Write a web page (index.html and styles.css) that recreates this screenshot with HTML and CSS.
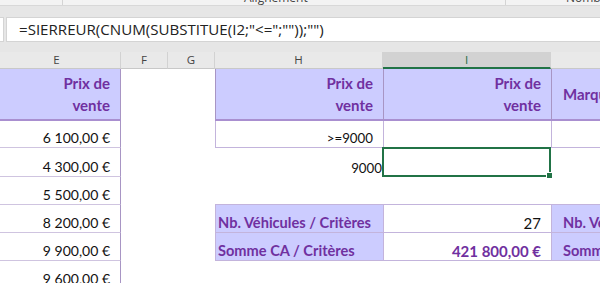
FILE: index.html
```html
<!DOCTYPE html>
<html lang="fr">
<head>
<meta charset="utf-8">
<title>Excel</title>
<link rel="stylesheet" href="styles.css">
</head>
<body>
<div class="app">
  <div class="ribbon">
    <div class="rgroup g1"></div>
    <div class="rgroup g2"><span class="rlabel">Alignement</span></div>
    <div class="rgroup g3"><span class="rlabel">Nombre</span></div>
  </div>
  <div class="fbar">
    <div class="namebox"></div>
    <div class="formula">=SIERREUR(CNUM(SUBSTITUE(I2;"&lt;=";""));"")</div>
  </div>
  <div class="sheet">
    <div class="ch">E</div>
    <div class="ch">F</div>
    <div class="ch">G</div>
    <div class="ch">H</div>
    <div class="ch sel">I</div>
    <div class="ch"></div>

    <div class="c e hd">Prix de<br>vente</div>
    <div class="c"></div>
    <div class="c"></div>
    <div class="c hd hl">Prix de<br>vente</div>
    <div class="c hd hl">Prix de<br>vente</div>
    <div class="c hd hl mid">Marque</div>

    <div class="c e num">6 100,00 €</div>
    <div class="c"></div>
    <div class="c"></div>
    <div class="c num sm bl bb">&gt;=9000</div>
    <div class="c bl bb"></div>
    <div class="c bl bb"></div>

    <div class="c e num">4 300,00 €</div>
    <div class="c"></div>
    <div class="c"></div>
    <div class="c num sm tight">9000</div>
    <div class="c active"><span class="handle"></span></div>
    <div class="c"></div>

    <div class="c e num">5 500,00 €</div>
    <div class="c"></div>
    <div class="c"></div>
    <div class="c bb"></div>
    <div class="c bb"></div>
    <div class="c bb"></div>

    <div class="c e num">8 200,00 €</div>
    <div class="c"></div>
    <div class="c"></div>
    <div class="c lab bl bb">Nb. Véhicules / Critères</div>
    <div class="c big bl bb">27</div>
    <div class="c lab lab2 bl bb">Nb. Véhicules / Critères</div>

    <div class="c e num">9 900,00 €</div>
    <div class="c"></div>
    <div class="c"></div>
    <div class="c lab bl bb">Somme CA / Critères</div>
    <div class="c big bold bl bb">421 800,00 €</div>
    <div class="c lab lab2 bl bb">Somme CA / Critères</div>

    <div class="c e num">9 600,00 €</div>
    <div class="c"></div>
    <div class="c"></div>
    <div class="c"></div>
    <div class="c"></div>
    <div class="c"></div>
  </div>
</div>
</body>
</html>
```
FILE: styles.css
```css
html, body {
  margin: 0;
  padding: 0;
  background: #e6e6e6;
  overflow: hidden;
}
.app {
  width: 600px;
  height: 283px;
  overflow: hidden;
  font-family: "Lato", "Open Sans", sans-serif;
}
.ribbon {
  height: 5px;
  background: #f3f3f3;
  border-bottom: 1px solid #d8d8d8;
  display: flex;
  overflow: hidden;
}
.rgroup {
  height: 5px;
  border-right: 1px solid #d4d4d4;
  position: relative;
  overflow: hidden;
}
.g1 { width: 62px; }
.g2 { width: 442px; }
.g3 { flex: 1; border-right: none; }
.rlabel {
  display: block;
  font-family: "Open Sans", sans-serif;
  font-size: 12px;
  line-height: 12px;
  color: #444;
  margin-top: -8px;
}
.g2 .rlabel { padding-left: 181px; }
.g3 .rlabel { padding-left: 60px; }
.fbar {
  display: flex;
  gap: 2px;
  margin-top: 11px;
  height: 25px;
}
.namebox {
  width: 3px;
  background: #fff;
  border: 1px solid #d4d4d4;
  border-left: none;
}
.formula {
  flex: 1;
  background: #fff;
  border: 1px solid #d4d4d4;
  border-right: none;
  font-family: "Open Sans", sans-serif;
  font-size: 15.1px;
  line-height: 23px;
  color: #222;
  padding-left: 12px;
  white-space: nowrap;
}
.sheet {
  margin-top: 10px;
  margin-left: -7px;
  display: grid;
  grid-template-columns: 128px 47px 47px 168px 168px 60px;
  grid-template-rows: 17px 52px 27px 29px 28px 28px 28px 28px;
  background: #fff;
}
.ch {
  background: #e9e9e9;
  border-right: 1px solid #d2d2d2;
  border-bottom: 1px solid #c8c8c8;
  font-family: "Open Sans", sans-serif;
  font-size: 11.5px;
  line-height: 16px;
  color: #444;
  text-align: center;
  box-sizing: border-box;
}
.ch.sel {
  background: #d2d2d2;
  color: #1e6b41;
  border-bottom: 2px solid #217346;
}
.c {
  box-sizing: border-box;
  position: relative;
  font-size: 14px;
  color: #111;
  white-space: nowrap;
  overflow: visible;
}
.e {
  border-right: 1px solid #a895c4;
  border-bottom: 1px solid #cfc4e0;
}
.hd {
  background: #ccccff;
  color: #7030a0;
  font-weight: bold;
  font-size: 15px;
  line-height: 22px;
  text-align: right;
  padding: 3px 10px 0 0;
  border-bottom: 2px solid #a98fd0;
}
.e.hd { border-right: 1px solid #a895c4; }
.hl { border-left: 1px solid #a895c4; }
.mid {
  text-align: left;
  padding: 0 0 0 11px;
  display: flex;
  align-items: center;
}
.num {
  text-align: right;
  padding-right: 10px;
  display: flex;
  align-items: flex-end;
  justify-content: flex-end;
  padding-bottom: 1px;
  line-height: 16px;
}
.sm { font-size: 13.3px; }
.tight { padding-right: 1px; }
.bl { border-left: 1px solid #c3b4dc; }
.bb { border-bottom: 1px solid #c3b4dc; }
.lab {
  background: #ccccff;
  color: #7030a0;
  font-weight: bold;
  font-size: 14.6px;
  display: flex;
  align-items: flex-end;
  padding: 0 0 1px 2px;
  line-height: 17px;
  overflow: hidden;
}
.lab2 { padding-left: 11px; }
.big {
  font-size: 15px;
  text-align: right;
  display: flex;
  align-items: flex-end;
  justify-content: flex-end;
  padding: 0 10px 0 0;
  line-height: 18px;
}
.bold {
  font-weight: bold;
  color: #7030a0;
}
.active {
  border: 2px solid #217346;
  margin: -1px 0 0 -1px;
}
.handle {
  position: absolute;
  right: -4px;
  bottom: -4px;
  width: 5px;
  height: 5px;
  background: #217346;
  border: 1px solid #fff;
}
```
